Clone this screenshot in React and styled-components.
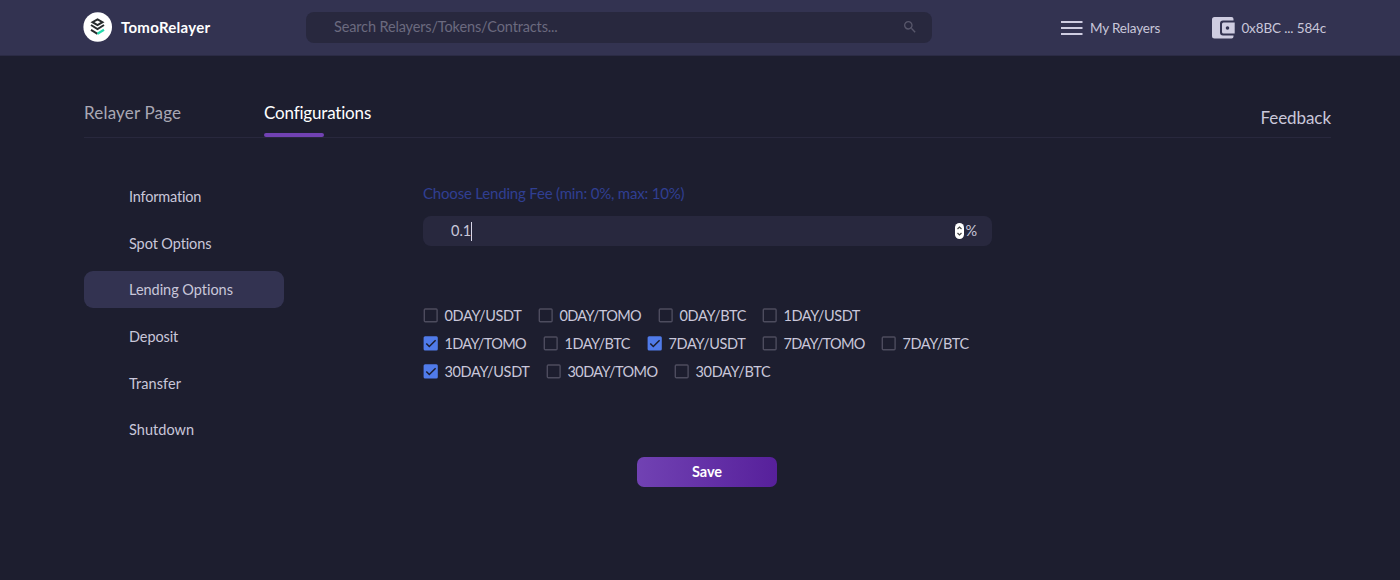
import React from 'react';
import styled, { createGlobalStyle, css } from 'styled-components';

const GlobalStyle = createGlobalStyle`
  * { box-sizing: border-box; }
  body {
    margin: 0;
    background: #1d1e2f;
    color: #c9c7da;
    font-family: Lato, "Noto Sans", sans-serif;
    font-size: 14.5px;
  }
`;

const Page = styled.div`
  min-height: 580px;
  background: #1d1e2f;
`;

const Text = styled.span`
  white-space: pre;
  font-variant-ligatures: none;
  letter-spacing: ${(p) => p.$track || 0}px;
  margin-bottom: ${(p) => p.$lift || 0}px;
`;

const Header = styled.header`
  height: 56px;
  padding-left: 83px;
  display: flex;
  align-items: flex-start;
  background: #333351;
  border-bottom: 1px solid #2b2b45;

  > * { flex-shrink: 0; }
`;

const Brand = styled.div`
  display: flex;
  align-items: center;
  gap: 9px;
  width: 223px;
  height: 54px;
  color: #fff;
  font-size: 15px;
  font-weight: 700;
`;

const SearchBar = styled.div`
  width: 626px;
  height: 31px;
  margin-top: 12px;
  padding: 0 14px 1px 28px;
  display: flex;
  align-items: center;
  justify-content: space-between;
  border-radius: 8px;
  background: #28283e;
  color: #6b6a7f;
`;

const HeaderLink = styled.div`
  display: flex;
  align-items: center;
  gap: ${(p) => p.$gap}px;
  height: 56px;
  margin-left: ${(p) => p.$offset}px;
  font-size: 13.5px;
`;

const Main = styled.main`
  margin: 0 69px 0 84px;
`;

const Tabs = styled.nav`
  display: flex;
  height: 82px;
  border-bottom: 1px solid #28283d;
  font-size: 17px;
`;

const Tab = styled.div`
  width: ${(p) => p.$width}px;
  height: 82px;
  padding-top: 45px;
  line-height: 24px;
  color: ${(p) => (p.$active ? '#fff' : '#a9a8b4')};
  ${(p) =>
    p.$active &&
    css`
      &::after {
        content: '';
        display: block;
        width: 60px;
        height: 4px;
        margin-top: 8px;
        border-radius: 2px;
        background: #7142b3;
      }
    `}
`;

const Feedback = styled.div`
  margin-left: auto;
  padding-top: 50px;
  line-height: 24px;
`;

const Body = styled.div`
  display: flex;
  padding-top: 40px;
`;

const Sidebar = styled.aside`
  width: 200px;
  display: flex;
  flex-direction: column;
  gap: 9.65px;
`;

const SideItem = styled.div`
  height: 37px;
  padding-left: 45px;
  line-height: 37px;
  border-radius: 9px;
  background: ${(p) => (p.$active ? '#333351' : 'transparent')};
`;

const Form = styled.section`
  width: 569px;
  margin-left: 139px;
  display: flex;
  flex-direction: column;
`;

const Label = styled.div`
  height: 38px;
  padding-top: 4px;
  line-height: 22px;
  font-size: 15px;
  color: #303f92;
`;

const FeeInput = styled.div`
  height: 30px;
  padding: 0 14px 0 28px;
  display: flex;
  align-items: center;
  border-radius: 8px;
  background: #28283e;
`;

const Caret = styled.span`
  width: 1px;
  height: 19px;
  background: #d8d6e8;
`;

const Stepper = styled.svg`
  margin: 0 2px 0 auto;
`;

const Pairs = styled.div`
  margin-top: 55px;
`;

const PairRow = styled.div`
  display: flex;
  height: 28px;
`;

const Pair = styled.div`
  display: flex;
  align-items: center;
  flex-shrink: 0;
  gap: 6.5px;
  width: ${(p) => p.$width}px;
  white-space: nowrap;

  > svg { flex-shrink: 0; }
`;

const SaveButton = styled.button`
  width: 140px;
  height: 30px;
  margin: 72px auto 0 214px;
  padding: 0;
  border: 0;
  border-radius: 7px;
  background: linear-gradient(90deg, #7142b3, #57209b);
  color: #fff;
  font: 700 14.5px/30px Lato, sans-serif;
`;

const Logo = () => (
  <svg width="29" height="30" viewBox="0 0 29 30">
    <ellipse cx="14.7" cy="15" rx="14.3" ry="14.8" fill="#fff" />
    <g fill="none" stroke="#272b2d" strokeWidth="2">
      <path d="M14.5 7.3 L19.5 10.2 L14.5 13.1 L9.5 10.2Z" />
      <path d="M8 13 L14.5 17 L21 13" />
      <path d="M8 17.8 L14.5 21.8" />
    </g>
    <path d="M14.5 21.8 L21 17.8" fill="none" stroke="#26d9ad" strokeWidth="2.2" />
  </svg>
);

const SearchIcon = () => (
  <svg width="16" height="16" viewBox="0 0 24 24" fill="#58576b">
    <path d="M15.5 14h-.79l-.28-.27A6.47 6.47 0 0 0 16 9.5 6.5 6.5 0 1 0 9.5 16c1.61 0 3.09-.59 4.23-1.57l.27.28v.79l5 4.99L20.49 19zm-6 0C7.01 14 5 11.99 5 9.5S7.01 5 9.5 5 14 7.01 14 9.5 11.99 14 9.5 14" />
  </svg>
);

const MenuIcon = () => (
  <svg width="22" height="16" viewBox="0 0 22 16" fill="#cfcde1">
    <path d="M0 1h21.5v2H0zM0 7h21.5v2H0zM0 13h21.5v2H0z" />
  </svg>
);

const WalletIcon = () => (
  <svg width="23" height="22" viewBox="0 0 23 22" fill="#cfcde1">
    <path d="M2.5 0H19.5a2 2 0 0 1 2 2v1.5H11a3 3 0 0 0-3 3v9a3 3 0 0 0 3 3h10.5v1a2 2 0 0 1-2 2h-17A2.5 2.5 0 0 1 0 19V2.5A2.5 2.5 0 0 1 2.5 0Z" />
    <path fillRule="evenodd" d="M11.5 5.5H22.7v11H11.5a1.5 1.5 0 0 1-1.5-1.5V7a1.5 1.5 0 0 1 1.5-1.5ZM15.5 9.2a1.8 1.8 0 1 0 0 3.6a1.8 1.8 0 0 0 0-3.6Z" />
  </svg>
);

const Checkbox = ({ checked }) => (
  <svg width="15" height="15" viewBox="0 0 15 15">
    {checked ? (
      <>
        <rect x="0.6" y="0.3" width="14.2" height="14.2" rx="1.5" fill="#507bea" />
        <path d="M3.3 7.5 L6.3 10.5 L12.6 4.2" fill="none" stroke="#1d1e2f" strokeWidth="1.5" />
      </>
    ) : (
      <rect x="1.3" y="1" width="12.8" height="12.8" rx="1" fill="none" stroke="#4d4c5e" strokeWidth="1.4" />
    )}
  </svg>
);

const sections = [
  ['Information', -0.2],
  ['Spot Options', -0.1],
  ['Lending Options', -0.03],
  ['Deposit', -0.1],
  ['Transfer', 0.07],
  ['Shutdown', 0.03],
];

const pairRows = [
  [
    { name: '0DAY/USDT', width: 115, track: -0.35 },
    { name: '0DAY/TOMO', width: 120, track: -0.65 },
    { name: '0DAY/BTC', width: 104, track: -0.35 },
    { name: '1DAY/USDT', width: 100, track: -0.4 },
  ],
  [
    { name: '1DAY/TOMO', width: 120, track: -0.65, checked: true },
    { name: '1DAY/BTC', width: 104, track: -0.5 },
    { name: '7DAY/USDT', width: 115, track: -0.35, checked: true },
    { name: '7DAY/TOMO', width: 119, track: -0.68 },
    { name: '7DAY/BTC', width: 90, track: -0.4 },
  ],
  [
    { name: '30DAY/USDT', width: 123, track: -0.35, checked: true },
    { name: '30DAY/TOMO', width: 128, track: -0.57 },
    { name: '30DAY/BTC', width: 100, track: -0.33 },
  ],
];

export default function App() {
  return (
    <Page>
      <GlobalStyle />
      <Header>
        <Brand>
          <Logo />
          <Text $track={0.28}>TomoRelayer</Text>
        </Brand>
        <SearchBar>
          <Text $track={-0.14} $lift={2}>Search Relayers/Tokens/Contracts...</Text>
          <SearchIcon />
        </SearchBar>
        <HeaderLink $gap={7} $offset={129}>
          <MenuIcon />
          <Text $track={-0.17} $lift={1}>My Relayers</Text>
        </HeaderLink>
        <HeaderLink $gap={6} $offset={52.3}>
          <WalletIcon />
          <Text $track={-0.13} $lift={1}>0x8BC ... 584c</Text>
        </HeaderLink>
      </Header>
      <Main>
        <Tabs>
          <Tab $width={180}><Text $track={0.18}>Relayer Page</Text></Tab>
          <Tab $width={140} $active><Text $track={-0.18}>Configurations</Text></Tab>
          <Feedback><Text $track={-0.06}>Feedback</Text></Feedback>
        </Tabs>
        <Body>
          <Sidebar>
            {sections.map(([name, track]) => (
              <SideItem key={name} $active={name === 'Lending Options'}>
                <Text $track={track}>{name}</Text>
              </SideItem>
            ))}
          </Sidebar>
          <Form>
            <Label><Text $track={-0.19}>Choose Lending Fee (min: 0%, max: 10%)</Text></Label>
            <FeeInput>
              <Text $lift={2}>0.1</Text>
              <Caret />
              <Stepper width="9" height="16" viewBox="0 0 9 16">
                <rect width="9" height="16" rx="4.5" fill="#fff" />
                <path d="M2.5 6 L4.5 4 L6.5 6M2.5 10 L4.5 12 L6.5 10" fill="none" stroke="#444" strokeWidth="1.2" />
              </Stepper>
              <Text $lift={2} $track={0.8}>%</Text>
            </FeeInput>
            <Pairs>
              {pairRows.map((row, i) => (
                <PairRow key={i}>
                  {row.map(({ name, width, track, checked }) => (
                    <Pair key={name} $width={width}>
                      <Checkbox checked={checked} />
                      <Text $track={track}>{name}</Text>
                    </Pair>
                  ))}
                </PairRow>
              ))}
            </Pairs>
            <SaveButton>Save</SaveButton>
          </Form>
        </Body>
      </Main>
    </Page>
  );
}
